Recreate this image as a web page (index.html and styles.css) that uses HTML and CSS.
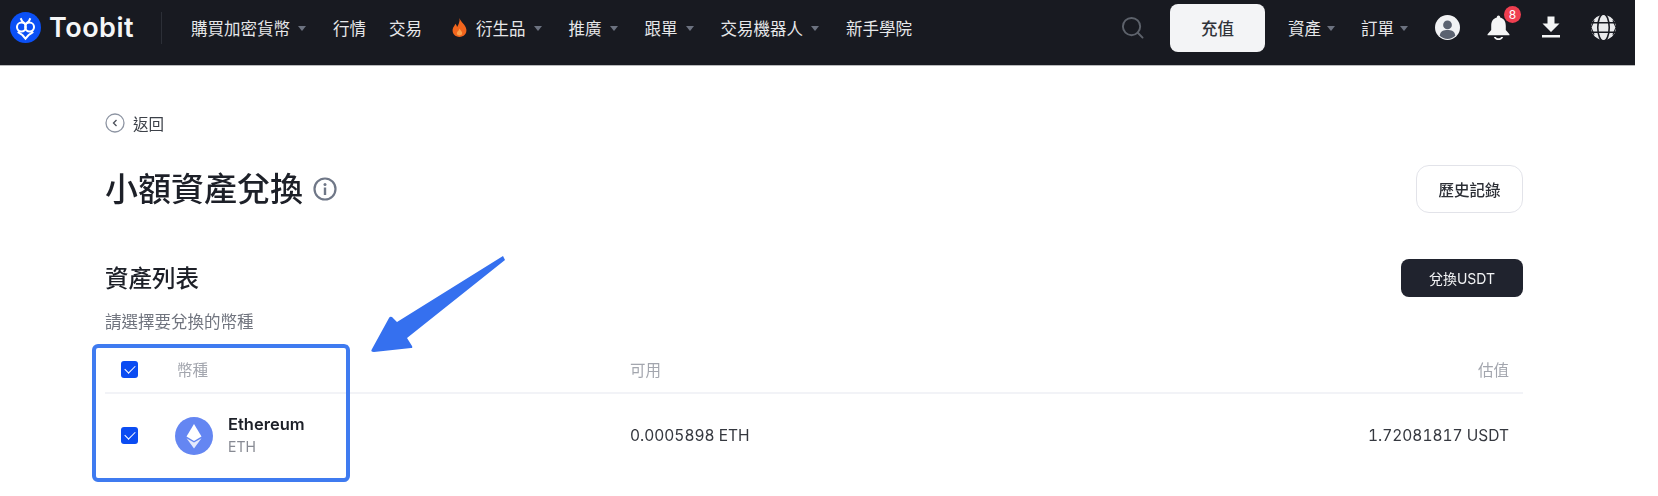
FILE: index.html
```html
<!DOCTYPE html>
<html lang="zh-Hant">
<head>
  <meta charset="UTF-8">
  <title>小額資產兌換</title>
  <link rel="stylesheet" href="styles.css">
</head>
<body>
  <div class="page">
    <header class="topbar">
      <div class="logo">
        <svg class="logo-mark" viewBox="0 0 32 32">
          <circle cx="16" cy="16" r="16" fill="#0b50f5"/>
          <g fill="none" stroke="#fff" stroke-width="2.100">
            <circle cx="11.800" cy="15.500" r="4.600"/>
            <circle cx="20.200" cy="15.500" r="4.600"/>
            <path d="M11 6.500 L12.500 9.500 L16 12.500 L19.500 9.500 L21 6.500"/>
            <path d="M8 20.500 L13 24 L16 27.500 L19 24 L24 20.500"/>
          </g>
        </svg>
        <span class="logo-text">Toobit</span>
      </div>
      <nav class="menu">
        <a class="menu-item">購買加密貨幣<i class="caret"></i></a>
        <a class="menu-item">行情</a>
        <a class="menu-item">交易</a>
        <a class="menu-item hot">
          <svg class="flame" viewBox="0 0 14 18">
            <path d="M7 0 C8 4 13 6 13.500 11 C14 15 11 18 7 18 C3 18 0 15 .5 11 C.8 8.500 2.500 7.500 3 5.500 C4 6.500 4.500 7.500 4.700 8.500 C6 6.500 7.500 3.500 7 0 Z" fill="#f2651d"/>
            <path d="M7 10 C8 12 10 13 9.500 15 C9 17 5 17 4.500 15 C4.200 13 6.500 12.500 7 10 Z" fill="#fba04a"/>
          </svg>
          衍生品<i class="caret"></i>
        </a>
        <a class="menu-item">推廣<i class="caret"></i></a>
        <a class="menu-item">跟單<i class="caret"></i></a>
        <a class="menu-item">交易機器人<i class="caret"></i></a>
        <a class="menu-item">新手學院</a>
      </nav>
      <div class="tools">
        <svg class="search" viewBox="0 0 24 24" fill="none" stroke="#5d626b" stroke-width="2">
          <circle cx="11" cy="11" r="9"/>
          <path d="M17.500 17.500 L22.500 22.500" stroke-linecap="round"/>
        </svg>
        <button class="deposit">充值</button>
        <a class="menu-item">資產<i class="caret"></i></a>
        <a class="menu-item">訂單<i class="caret"></i></a>
        <svg class="tool-icon avatar" viewBox="0 0 24 24">
          <circle cx="12" cy="12" r="12" fill="#f1f2f4"/>
          <circle cx="12" cy="9.500" r="4.200" fill="#5b6270"/>
          <path d="M4.500 20 C5 15.500 8.500 14.500 12 14.500 C15.500 14.500 19 15.500 19.500 20 C17.500 22 15 23 12 23 C9 23 6.500 22 4.500 20 Z" fill="#5b6270"/>
        </svg>
        <div class="bell-wrap">
          <svg class="tool-icon" viewBox="0 0 24 24" fill="#f4f5f6">
            <path d="M12 .5 C13 .5 13.600 1.300 13.600 2.300 C17.500 3.300 19 6.500 19 10.500 L19 14.500 L22.500 18.500 L22.500 19.500 L1.500 19.500 L1.500 18.500 L5 14.500 L5 10.500 C5 6.500 6.500 3.300 10.400 2.300 C10.400 1.300 11 .5 12 .5 Z"/>
            <path d="M7.500 21 L9.500 21 C10 22 11 22.400 12 22.400 C13 22.400 14 22 14.500 21 L16.500 21 C16 23 14 24 12 24 C10 24 8 23 7.500 21 Z"/>
          </svg>
          <span class="badge">8</span>
        </div>
        <svg class="tool-icon download" viewBox="0 0 20 24" fill="#f4f5f6">
          <path d="M6.500 1 L13.500 1 L13.500 8 L18.500 8 L10 16.500 L1.500 8 L6.500 8 Z"/>
          <rect x="1" y="19.500" width="18" height="2.500"/>
        </svg>
        <svg class="tool-icon" viewBox="0 0 24 24">
          <circle cx="12" cy="12" r="12" fill="#e9eaec"/>
          <g fill="none" stroke="#181a21" stroke-width="1.500">
            <ellipse cx="12" cy="12" rx="5.500" ry="13"/>
            <path d="M0 7.500 L24 7.500 M0 16.500 L24 16.500"/>
          </g>
          <path d="M0 12 L3 5 M24 12 L21 5 M0 12 L3 19 M24 12 L21 19" stroke="#181a21" stroke-width="1"/>
        </svg>
      </div>
    </header>

    <main class="content">
      <a class="back">
        <svg class="back-icon" viewBox="0 0 20 20" fill="none">
          <circle cx="10" cy="10" r="9" stroke="#8e95a3" stroke-width="1.300"/>
          <path d="M11.500 7 L8.500 10 L11.500 13" stroke="#4a4f59" stroke-width="1.300"/>
        </svg>
        返回
      </a>

      <div class="title-row">
        <h1>小額資產兌換
          <svg class="info" viewBox="0 0 24 24" fill="none">
            <circle cx="12" cy="12" r="10.500" stroke="#6f7787" stroke-width="2.200"/>
            <circle cx="12" cy="7.500" r="1.500" fill="#6f7787"/>
            <rect x="10.800" y="10.500" width="2.400" height="7.500" fill="#6f7787"/>
          </svg>
        </h1>
        <button class="btn-outline">歷史記錄</button>
      </div>

      <div class="list-head">
        <div>
          <h2>資產列表</h2>
          <p class="hint">請選擇要兌換的幣種</p>
        </div>
        <button class="btn-dark">兌換USDT</button>
      </div>

      <div class="table">
        <div class="table-row table-head">
          <span class="check"></span>
          <span>幣種</span>
          <span>可用</span>
          <span class="right">估值</span>
        </div>
        <div class="table-row">
          <span class="check"></span>
          <div class="coin">
            <svg class="coin-icon" viewBox="0 0 38 38">
              <circle cx="19" cy="19" r="19" fill="#6486f2"/>
              <path d="M19 7 L26.500 19.500 L19 24 L11.500 19.500 Z" fill="#fff"/>
              <path d="M11.500 21.200 L19 25.600 L26.500 21.200 L19 31.500 Z" fill="#e4e9fc"/>
            </svg>
            <div>
              <div class="coin-name">Ethereum</div>
              <div class="coin-code">ETH</div>
            </div>
          </div>
          <span>0.0005898 ETH</span>
          <span class="right">1.72081817 USDT</span>
        </div>
      </div>
    </main>

    <div class="mark-box"></div>
    <svg class="mark-arrow" viewBox="0 0 150 110">
      <path d="M137 2 L139 6 L41 84 L46 92 Q47 94 45 94 L8 98 Q4 98 6 95 L23 64 Q24 62 26 63 L31 68 Z" fill="#3570ef"/>
    </svg>
  </div>
</body>
</html>
```

FILE: styles.css
```css
* {
  box-sizing: border-box;
}
body {
  margin: 0;
  background: #fff;
  color: #1d2028;
  font-family: Inter, "Noto Sans CJK TC", sans-serif;
}
button {
  font-family: inherit;
  cursor: pointer;
}
.page {
  position: relative;
  height: 496px;
  overflow: hidden;
  filter: blur(.5px);
}

/* top bar */
.topbar {
  display: flex;
  align-items: center;
  width: 1635px;
  height: 66px;
  padding: 0 0 10px 10px;
  background: #181a21;
  border-bottom: 1px solid #b9babc;
}
.logo {
  display: flex;
  align-items: center;
  gap: 8px;
  width: 152px;
  height: 32px;
  border-right: 1px solid #2c2f37;
}
.logo-mark {
  width: 31px;
  height: 31px;
}
.logo-text {
  color: #f5f6f7;
  font-size: 27px;
  font-weight: 600;
  letter-spacing: .5px;
}
.menu {
  display: flex;
  align-items: center;
  gap: 23px;
  margin-left: 29px;
}
.menu-item {
  display: flex;
  align-items: center;
  color: #e6e7e9;
  font-size: 16.500px;
  white-space: nowrap;
}
.caret {
  width: 0;
  height: 0;
  margin-left: 8px;
  margin-top: 2px;
  border-left: 4px solid transparent;
  border-right: 4px solid transparent;
  border-top: 5px solid #6c7280;
}
.menu .caret {
  margin-right: 4px;
}
.tools .caret {
  margin-left: 6px;
}
.flame {
  width: 15px;
  height: 19px;
  margin-left: 7px;
  margin-right: 9px;
}
.tools {
  display: flex;
  align-items: center;
  margin-left: auto;
  padding-right: 19px;
}
.search {
  width: 23px;
  height: 23px;
  margin-right: 26px;
}
.deposit {
  width: 95px;
  height: 48px;
  margin-right: 23px;
  border: 0;
  border-radius: 8px;
  background: #f3f4f6;
  color: #30333a;
  font-size: 16.500px;
  font-weight: 500;
}
.tools .menu-item + .menu-item {
  margin-left: 26px;
}
.tool-icon {
  display: block;
  width: 25px;
  height: 25px;
}
.avatar {
  margin-left: 27px;
}
.bell-wrap {
  position: relative;
  margin-left: 26px;
}
.badge {
  position: absolute;
  top: -9px;
  right: -10px;
  width: 17px;
  height: 17px;
  border-radius: 50%;
  background: #ef3f50;
  color: #fff;
  font-size: 12px;
  line-height: 17px;
  text-align: center;
}
.download {
  width: 20px;
  margin-left: 30px;
  margin-right: 30px;
}

/* page content */
.content {
  padding: 47px 135px 0 105px;
}
.back {
  display: flex;
  align-items: center;
  gap: 8px;
  height: 20px;
  color: #3c4048;
  font-size: 15.500px;
}
.back-icon {
  width: 20px;
  height: 20px;
}
.title-row {
  display: flex;
  justify-content: space-between;
  align-items: center;
  height: 48px;
  margin-top: 32px;
}
h1 {
  display: flex;
  align-items: center;
  gap: 10px;
  margin: 0;
  padding-bottom: 4px;
  font-size: 33px;
  font-weight: 500;
}
.info {
  width: 24px;
  height: 24px;
  margin-top: 4px;
}
.btn-outline {
  width: 107px;
  height: 48px;
  border: 1.500px solid #e2e3e9;
  border-radius: 13px;
  background: #fff;
  color: #2c2f36;
  font-size: 15.500px;
  font-weight: 500;
}
.list-head {
  display: flex;
  justify-content: space-between;
  align-items: flex-start;
  margin-top: 46px;
}
h2 {
  margin: 0;
  height: 38px;
  padding-top: 1px;
  font-size: 23.500px;
  font-weight: 500;
  line-height: 38px;
}
.hint {
  margin: 15px 0 0;
  color: #71757f;
  font-size: 16.500px;
  line-height: 20px;
}
.btn-dark {
  width: 122px;
  height: 38px;
  border: 0;
  border-radius: 8px;
  background: #20232e;
  color: #f2f3f5;
  font-size: 14px;
}

/* asset table */
.table {
  margin-top: 14px;
  font-size: 15.500px;
  color: #35383f;
  font-variant-numeric: tabular-nums;
}
.table-row {
  display: grid;
  grid-template-columns: 56px 453px 1fr 1fr;
  align-items: center;
  height: 83px;
  padding: 0 14px 0 16px;
}
.table-head {
  height: 48px;
  border-bottom: 2px solid #f2f3f7;
  color: #a3a6ae;
}
.right {
  text-align: right;
}
.check {
  position: relative;
  width: 17px;
  height: 17px;
  border-radius: 3px;
  background: #0b4cf2;
}
.check::after {
  content: "";
  position: absolute;
  left: 4px;
  top: 4px;
  width: 9px;
  height: 5px;
  border-left: 1.500px solid #fff;
  border-bottom: 1.500px solid #fff;
  transform: rotate(-45deg);
}
.coin {
  display: flex;
  align-items: center;
  gap: 15px;
  margin-left: -2px;
}
.coin-icon {
  width: 38px;
  height: 38px;
}
.coin-name {
  color: #1d2028;
  font-size: 16.500px;
  font-weight: 600;
  line-height: 23px;
}
.coin-code {
  color: #878a93;
  font-size: 14px;
  line-height: 22px;
}

/* screenshot annotation drawn on top */
.mark-box {
  position: absolute;
  left: 92px;
  top: 344px;
  width: 258px;
  height: 138px;
  border: 4px solid #3f7bf0;
  border-radius: 6px;
}
.mark-arrow {
  position: absolute;
  left: 366px;
  top: 254px;
  width: 150px;
  height: 110px;
}
```
